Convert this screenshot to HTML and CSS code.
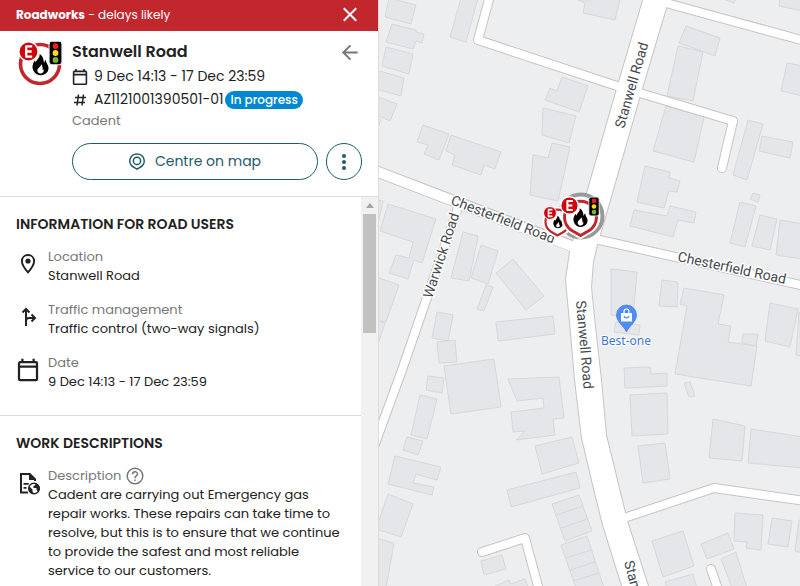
FILE: index.html
```html
<!DOCTYPE html>
<html lang="en">
<head>
<meta charset="utf-8">
<meta name="viewport" content="width=device-width, initial-scale=1">
<title>Stanwell Road roadworks</title>
<link rel="stylesheet" href="styles.css">
</head>
<body>
<svg class="defs" aria-hidden="true">
  <defs>
    <symbol id="flame" viewBox="0 0 16 20">
      <path d="M7 0C8 3 4.500 5 3.500 8L2.800 6C0 10 0 13 1.500 16 3 19 6 20 8 20 13 20 16 16.500 15.500 12.500 15 9.500 13 8.500 13 5.500 11.800 6.500 11.500 8 11.500 9 10.800 5 10.500 2 7 0Z"/>
      <path fill="#fff" d="M8.500 9.500C9 12 5 13 5 15.500 5 17.500 6.500 18.500 8 18.500 10.200 18.500 11.500 17 11 14.500L10 15.500C10.200 13 9.800 11 8.500 9.500Z"/>
    </symbol>
    <symbol id="badge-e" viewBox="0 0 20 20">
      <circle cx="10" cy="10" r="9.200" fill="#d0060c" stroke="#fff" stroke-width="1.400"/>
      <path d="M7 5.200H13.500M7 10H13M7 14.800H13.500M7.800 5V15" fill="none" stroke="#fff" stroke-width="2.200"/>
    </symbol>
    <symbol id="signal" viewBox="0 0 14 24">
      <rect x="1" y="1" width="12" height="22" rx="2.500" fill="#000" stroke="#eee" stroke-width="1"/>
      <circle cx="7" cy="5.500" r="2.700" fill="#f01e1e"/>
      <circle cx="7" cy="12" r="2.700" fill="#ffdf10"/>
      <circle cx="7" cy="18.500" r="2.700" fill="#78b82a"/>
    </symbol>
    <symbol id="calendar" viewBox="0 0 24 24">
      <path d="M19,3H18V1H16V3H8V1H6V3H5C3.890,3 3,3.900 3,5V19A2,2 0 0,0 5,21H19A2,2 0 0,0 21,19V5A2,2 0 0,0 19,3M19,19H5V9H19V19M19,7H5V5H19V7Z"/>
    </symbol>
  </defs>
</svg>
<div class="app">
  <aside class="panel">
    <div class="banner">
      <p class="banner-text"><strong>Roadworks</strong> - delays likely</p>
      <button class="icon-button" type="button" aria-label="Close">
        <svg viewBox="0 0 24 24"><path d="M5.500 5.500 18.500 18.500M18.500 5.500 5.500 18.500" stroke="#fff" stroke-width="2" fill="none"/></svg>
      </button>
    </div>
    <header class="summary">
      <svg class="emblem" viewBox="0 0 48 48" aria-hidden="true">
        <circle cx="24" cy="25" r="19.500" fill="#fff" stroke="#c1272d" stroke-width="3.600"/>
        <use href="#flame" x="16" y="14" width="17" height="23"/>
        <use href="#badge-e" x="2" y="2" width="21" height="21"/>
        <use href="#signal" x="32" y="1" width="15" height="26"/>
      </svg>
      <div class="summary-main">
        <div class="title-row">
          <h1 class="title">Stanwell Road</h1>
          <button class="icon-button" type="button" aria-label="Back">
            <svg viewBox="0 0 24 24"><path d="M20 12H5M12.500 4.500 5 12 12.500 19.500" stroke="#777" stroke-width="2" fill="none"/></svg>
          </button>
        </div>
        <p class="fact"><svg class="small-icon" viewBox="2 1 20 20" aria-hidden="true"><use href="#calendar" width="24" height="24"/></svg>9 Dec 14:13 - 17 Dec 23:59</p>
        <p class="fact"><svg class="small-icon" viewBox="0 0 16 16" aria-hidden="true"><path d="M6.500 2.500 5 13.500M11.500 2.500 10 13.500M3 5.500H14M2 10.500H13" stroke="#222" stroke-width="1.500" fill="none"/></svg><span class="reference">AZ1121001390501-01</span><span class="status">In progress</span></p>
        <p class="operator">Cadent</p>
        <div class="actions">
          <button class="centre-button" type="button">
            <svg class="centre-icon" viewBox="0 0 16 17" aria-hidden="true"><g fill="none" stroke="#1f5a6b" stroke-width="1.500"><path d="M8 .9a7 7 0 0 1 3 13.400L8 16.100 5 14.300A7 7 0 0 1 8 .9Z"/><circle cx="8" cy="7.900" r="3.600"/></g></svg>
            Centre on map
          </button>
          <button class="more-button" type="button" aria-label="More actions">
            <svg viewBox="0 0 16 16"><g fill="#1f5a6b"><circle cx="8" cy="2" r="2"/><circle cx="8" cy="8" r="2"/><circle cx="8" cy="14" r="2"/></g></svg>
          </button>
        </div>
      </div>
    </header>
    <div class="details">
      <div class="details-content">
        <section class="section">
          <h2 class="section-title">INFORMATION FOR ROAD USERS</h2>
          <div class="item">
            <svg class="item-icon" viewBox="0 0 28 28" aria-hidden="true"><path d="M14 5C10.300 5 7.900 7.700 7.900 11.200 7.900 15.400 14 22.300 14 22.300S20.100 15.400 20.100 11.200C20.100 7.700 17.700 5 14 5Z" fill="none" stroke="#222" stroke-width="1.900"/><circle cx="14" cy="11" r="2.600"/></svg>
            <div><p class="label">Location</p><p class="value">Stanwell Road</p></div>
          </div>
          <div class="item">
            <svg class="item-icon" viewBox="0 0 28 28" aria-hidden="true"><path d="M12 23V6M8.500 9.500 12 6 15.500 9.500M12 18C12 15.500 13.500 15 15 15H20M17.500 11.500 21 15 17.500 18.500" fill="none" stroke="#222" stroke-width="2"/></svg>
            <div><p class="label">Traffic management</p><p class="value">Traffic control (two-way signals)</p></div>
          </div>
          <div class="item">
            <svg class="item-icon" viewBox="0 0 28 28" aria-hidden="true"><use href="#calendar" x="0.500" y="1.500" width="27" height="27"/></svg>
            <div><p class="label">Date</p><p class="value">9 Dec 14:13 - 17 Dec 23:59</p></div>
          </div>
        </section>
        <section class="section">
          <h2 class="section-title">WORK DESCRIPTIONS</h2>
          <div class="item">
            <svg class="item-icon" viewBox="0 0 28 28" aria-hidden="true"><path d="M14 23.500H7V5H15.500L21 10.500V12" fill="none" stroke="#222" stroke-width="2"/><path d="M15 4.500V11H21.500L22 10 16 4ZM9.500 14H15V15.700H9.500ZM9.500 18H12.500V19.700H9.500Z"/><circle cx="20" cy="19.500" r="6.900" fill="#fff"/><circle cx="20" cy="19.500" r="5.300" fill="none" stroke="#222" stroke-width="1.400"/><path d="M15 17 18.500 20.500V22.500L20 25C16 25 14 21 15 17ZM21 14.500 21.500 16 19.500 17V19H22.500V21L24 22.500 26 20C26 17 24 15 21 14.500Z"/></svg>
            <div>
              <p class="label with-help">Description
                <svg class="help-icon" viewBox="0 0 18 18" role="img" aria-label="Help"><circle cx="9" cy="9" r="7.800" fill="none" stroke="#777" stroke-width="1.500"/><path d="M6.500 7.200C6.500 3.800 11.500 3.900 11.500 7 11.500 9 9 8.800 9 11.200M9 12.500V14.100" fill="none" stroke="#777" stroke-width="1.500"/></svg>
              </p>
              <p class="value">Cadent are carrying out Emergency gas repair works. These repairs can take time to resolve, but this is to ensure that we continue to provide the safest and most reliable service to our customers.</p>
            </div>
          </div>
        </section>
      </div>
      <div class="scroll-track" aria-hidden="true"><span class="scroll-arrow"></span><span class="scroll-thumb"></span></div>
    </div>
  </aside>
  <main class="map">
    <svg class="map-canvas" viewBox="379 0 421 586" preserveAspectRatio="xMinYMin slice" role="img" aria-label="Map of Stanwell Road">
      <g class="buildings">
        <path d="M389-2 416 5 411 24 385 17ZM392 24 416 30V32L424 34 422 43 416 41 413 49 386 42ZM386 47 413 54 409 74 382 66ZM376 70 404 78 401 96 376 89ZM376 96 397 104 390 121 376 115ZM376 118 381 120 378 128ZM461-2H478L466 42 450 37Z"/>
        <path d="M578 0 585 3 583 13 615 20 620-1ZM562 77 588 86 579 112 545 100 550 88 557 91ZM543 108 576 116 569 143 542 135ZM552 143 570 147 558 201 530 195 533 155 548 158ZM423 125 449 134 439 160 424 154 428 145 417 142ZM451 135 501 152 495 169 484 165 481 175 452 165 455 155 446 151Z"/>
        <path d="M686 26 720 38 715 56 679 43ZM678 46 703 52 693 101 667 96ZM666 106 704 117 694 162 653 151ZM645 166 670 172 669 178 680 181 677 192 669 191 664 208 637 202ZM748 120 763 124 747 180 733 175ZM762 136 793 142 790 158 759 151ZM787 63 803 66V96L781 91ZM780-1 779 6 803 11V-1ZM723-1 734 3 736-1Z"/>
        <path d="M634 210 667 216 670 206 696 212 694 223 678 220 673 237 630 226ZM740 202 756 206 745 247 730 243ZM760 215 777 219 770 250 752 246ZM780 220 803 224V259L776 255ZM753 193 760 195 758 202 750 199ZM611 269 637 272 633 317 611 315ZM616 322 640 325 639 335 614 332ZM662 280 678 282 677 307 659 306Z"/>
        <path d="M684 288 724 295 718 324 731 326 728 342 757 346 751 386 675 374 687 306 680 304ZM743 334H758L756 346 742 343ZM770 303 798 309 790 347 765 341ZM799 312H803V356L796 355ZM624 368 650 367 651 374 667 373V386L625 388Z"/>
        <path d="M684 383 690 382 695 396 689 397ZM630 395 667 393 668 434 632 436ZM638 446 665 443 670 479 643 483ZM713 419 745 426 742 461 709 458ZM751 429 803 437V468L748 463ZM735 513 763 515 761 550 746 548 747 542 734 541ZM772 518 792 521 788 547 768 544ZM799 520H803V553L795 551ZM652 541 683 531 694 566 663 577ZM701 544 728 533 734 549 707 559ZM721 559 736 552 747 588H732ZM665 582 693 574 697 588H667Z"/>
        <path d="M428 376 444 378 442 393 426 390ZM444 366 494 359 501 407 451 414ZM508 379 559 377 564 418 553 419 555 435 516 440 525 431 513 432 511 412 544 408 543 398 517 401ZM420 395 437 399 427 439 411 435ZM407 437 423 441 418 455 403 450ZM395 456 441 467 437 480 416 474 413 483 434 487 432 495 388 484ZM388 494 413 504 401 537 376 529ZM376 538 394 543 386 588H376Z"/>
        <path d="M535 446 572 437 579 463 542 474ZM507 490 576 472 580 488 511 507ZM552 504 579 495 592 531 565 541ZM556 515 583 506M561 528 588 519M561 545 587 536 604 588H576ZM566 558 591 550M570 570 595 562M573 581 599 573M481 561 502 555 506 569 484 575ZM493 587 509 580 511 584 525 579 528 587Z"/>
        <path d="M388 204 436 219 422 263 414 260 408 279 389 273 396 255 409 258 413 242 380 231ZM376 200 383 201 378 225ZM463 232 478 236 469 281 451 278ZM481 245 498 251 488 284 471 278ZM513 259 544 296 526 310 496 273ZM486 285 493 287 484 311 477 309ZM437 312 453 315 448 341 432 338ZM437 342 455 340 457 362 439 363ZM496 322 553 316 555 334 498 341ZM376 277 399 285 386 322 376 320ZM376 321 385 323 376 350Z"/>
      </g>
      <defs>
        <g id="side-roads">
          <path d="M491-8 478 40 620 87 733 121 722 168"/>
          <path d="M655 0 805 41"/>
          <path d="M595 239 805 286"/>
          <path d="M460 202 402 370 372 452"/>
          <path d="M615 521 714 488 805 501"/>
          <path d="M482 552 525 538 539 590"/>
          <path d="M711 569 719 592"/>
        </g>
        <path id="main-road" d="M644-3 619 82 585 200 570 252 566 280 571 333 575 380 582 438 596 497 603 525 623 589H649L627 521 606 435 601 380 595 327 591 287 593 262 597 245 610 200 641 92 666 8 669-3Z"/>
      </defs>
      <g class="road-edge"><use href="#side-roads" class="edge-side"/><path class="edge-wide" d="M370 169 575 247"/><use href="#main-road" class="edge-main"/></g>
      <g class="road-fill"><use href="#side-roads" class="fill-side"/><path class="fill-wide" d="M370 169 579 249"/><use href="#main-road" class="fill-main"/></g>
      <g class="road-names">
        <text transform="translate(450 204) rotate(21)">Chesterfield Road</text>
        <text transform="translate(432 299) rotate(-72)">Warwick Road</text>
        <text transform="translate(624 129) rotate(-74)">Stanwell Road</text>
        <text transform="translate(576 301) rotate(85)">Stanwell Road</text>
        <text transform="translate(624 562) rotate(75)">Stanwell Road</text>
        <text transform="translate(677 261) rotate(12)">Chesterfield Road</text>
      </g>
      <g>
        <path d="M626.500 332C624 326 616.500 322 616.500 315A10 10 0 0 1 636.500 315C636.500 322 629 326 626.500 332Z" fill="#4d8df5" stroke="#3e78d6" stroke-width=".7"/>
        <path d="M621 313H632V321.500H621Z" fill="#fff"/><path d="M624 313V311.500A2.500 2.500 0 0 1 629 311.500V313" fill="none" stroke="#fff" stroke-width="1.200"/><path d="M624 316A2.600 2.600 0 0 0 629 316" fill="none" stroke="#4d8df5" stroke-width="1.200"/>
        <text class="place-name" x="626" y="345">Best-one</text>
      </g>
      <g>
        <circle cx="581" cy="216" r="21.500" fill="#fff" fill-opacity=".5" stroke="#999" stroke-width="4"/>
        <path d="M557.500 236.500 551 233A13 13 0 1 1 564 233Z" fill="#fff" stroke="#fff" stroke-width="4"/>
        <path d="M557.500 235.500 551.500 232A12 12 0 1 1 563.500 232Z" fill="#fff" stroke="#c1272d" stroke-width="2.200"/>
        <use href="#flame" x="553" y="215" width="10" height="14"/>
        <use href="#badge-e" x="543" y="206" width="14" height="14"/>
        <path d="M580.500 236.500 571 231A17 17 0 1 1 590 231Z" fill="#fff" stroke="#fff" stroke-width="5"/>
        <path d="M580.500 235.500 571 230A16 16 0 1 1 590 230Z" fill="#fff" stroke="#c1272d" stroke-width="3"/>
        <use href="#flame" x="573" y="208" width="15" height="19"/>
        <use href="#badge-e" x="560" y="196" width="19" height="19"/>
        <use href="#signal" x="588" y="196" width="12" height="21"/>
      </g>
    </svg>
  </main>
</div>
</body>
</html>
```
FILE: styles.css
```css
* { box-sizing: border-box; }
body { margin: 0; font-family: Poppins, Inter, "Open Sans", sans-serif; font-size: 13px; color: #222; }
h1, h2, p { margin: 0; }
button { font: inherit; color: inherit; cursor: pointer; }
.defs { position: absolute; width: 0; height: 0; }
.app { display: flex; height: 100vh; overflow: hidden; }

.panel { flex: 0 0 378px; display: flex; flex-direction: column; background: #fff; }
.banner { display: flex; align-items: center; justify-content: space-between; padding: 3px 16px 5px; color: #fff; background: #c1272d; }
.banner-text { font-size: 12px; line-height: 23px; }
.icon-button { display: flex; padding: 0; border: 0; background: none; }
.icon-button svg { width: 24px; height: 23px; }

.summary { display: flex; gap: 8px; padding: 8px 16px 16px; border-bottom: 1px solid #ddd; }
.emblem { flex: none; width: 48px; height: 48px; }
.summary-main { flex: 1; min-width: 0; }
.title-row { display: flex; align-items: center; justify-content: space-between; height: 26px; }
.title { font-size: 16px; line-height: 26px; font-weight: 600; }
.fact { display: flex; align-items: center; font-size: 14px; line-height: 23px; }
.small-icon { width: 16px; height: 16px; margin-right: 6px; fill: #222; }
.status { margin-left: 2px; padding: 0 5px; border-radius: 9px; font-size: 12px; line-height: 18px; font-weight: 500; color: #fff; background: #0288d1; }
.operator { line-height: 19px; color: #777; }
.actions { display: flex; gap: 8px; margin-top: 13px; }
.centre-button, .more-button { display: flex; align-items: center; justify-content: center; height: 37px; padding: 0; border: 1px solid #1f5a6b; border-radius: 19px; background: #fff; }
.centre-button { flex: 1; gap: 10px; font-size: 14px; color: #1f5a6b; }
.centre-icon { width: 16px; height: 17px; }
.more-button { width: 36px; }
.more-button svg { width: 16px; height: 16px; }

.details { flex: 1; display: flex; min-height: 0; overflow: hidden; }
.details-content { flex: 1; min-width: 0; }
.section { padding: 15px 16px 24px; border-bottom: 1px solid #ddd; }
.section-title { margin-bottom: 11px; font-size: 14px; line-height: 24px; font-weight: 600; }
.item { display: flex; gap: 6px; margin-left: -2px; }
.item + .item { margin-top: 15px; }
.item-icon { flex: none; width: 28px; height: 28px; margin-top: 3px; fill: #222; }
.label, .value { line-height: 19px; }
.label { color: #777; }
.with-help { display: flex; align-items: center; gap: 5px; }
.help-icon { width: 18px; height: 18px; }
.scroll-track { flex: 0 0 17px; padding: 6px 2px; background: #f1f1f1; }
.scroll-arrow { display: block; width: 0; margin: 0 auto 6px; border: 4px solid transparent; border-top: 0; border-bottom: 5px solid #a3a3a3; }
.scroll-thumb { display: block; height: 119px; background: #c1c1c1; }

.map { flex: 1; min-width: 0; background: #eceef0; border-left: 1px solid #dcdcde; }
.map-canvas { display: block; width: 100%; height: 100%; }
.buildings { fill: #e4e6ea; stroke: #d7d8da; stroke-width: 1; }
.road-edge, .road-fill { fill: none; stroke-linejoin: round; stroke-linecap: round; }
.edge-side, .edge-wide, .edge-main { stroke: #c9c4c2; }
.edge-side { stroke-width: 10px; }
.edge-wide { stroke-width: 12px; }
.edge-main { stroke-width: 2px; }
.fill-side, .fill-wide { stroke: #fff; }
.fill-side { stroke-width: 8px; }
.fill-wide { stroke-width: 10px; }
.fill-main { fill: #fff; }
.road-names { font-family: Roboto, sans-serif; font-size: 14px; fill: #45484c; stroke: #fff; stroke-width: 3px; stroke-linejoin: round; paint-order: stroke; }
.place-name { font-family: "Noto Sans", sans-serif; font-size: 12px; fill: #3b78d8; stroke: #fff; stroke-width: 2px; paint-order: stroke; text-anchor: middle; }
```
